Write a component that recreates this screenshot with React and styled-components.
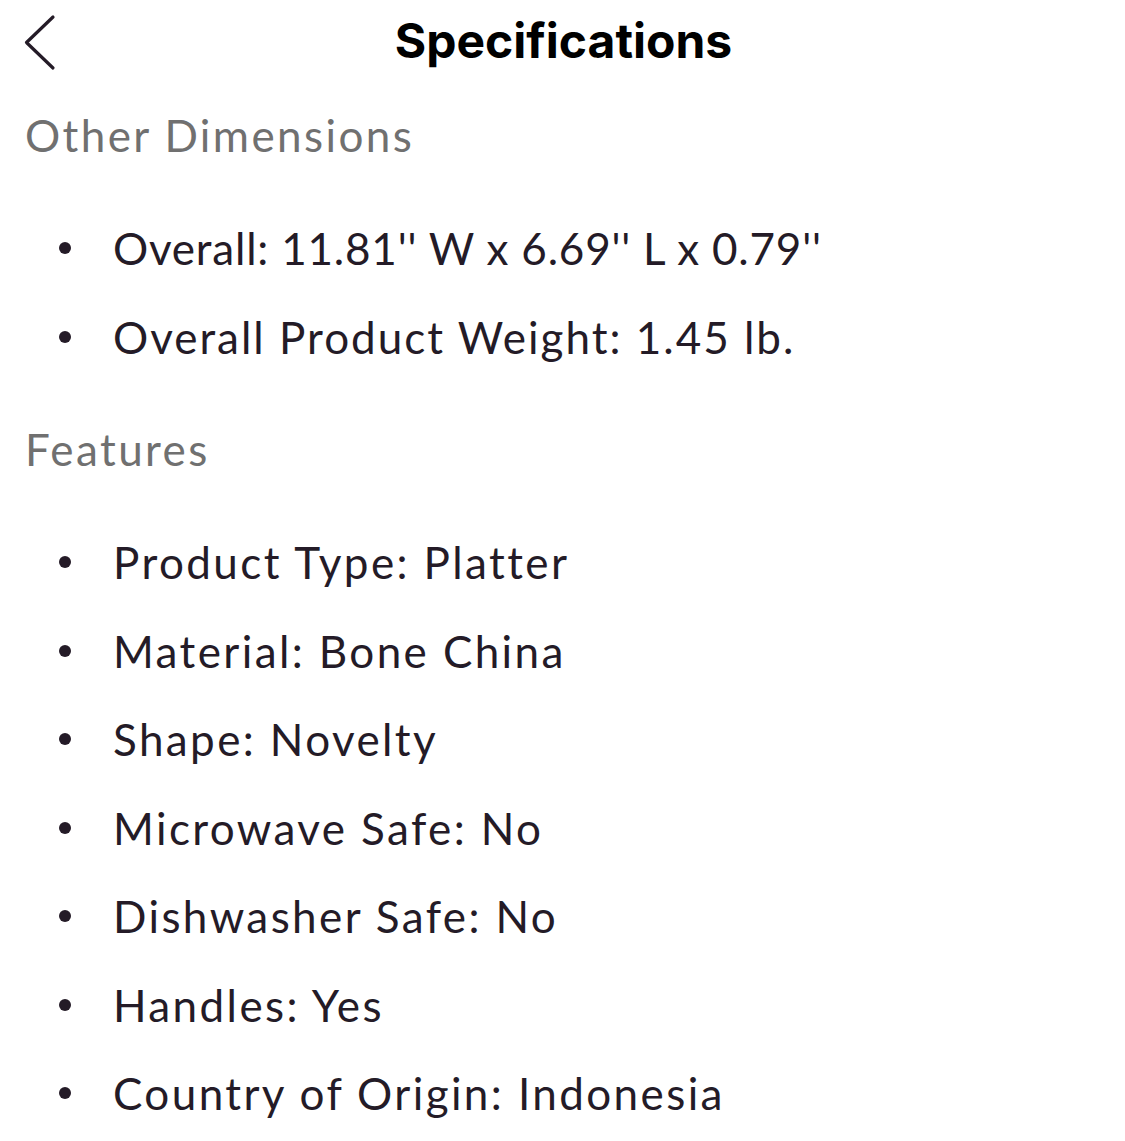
import React from "react";
import styled, { createGlobalStyle } from "styled-components";

const Global = createGlobalStyle`
  html, body { margin: 0; padding: 0; background: #fff; }
  body { font-family: Lato, "Open Sans", sans-serif; }
`;

const Page = styled.div`
  width: 1125px;
  min-height: 1141px;
  background: #fff;
  overflow: hidden;
`;

const Header = styled.header`
  position: relative;
  height: 80px;
  display: flex;
  align-items: center;
  justify-content: center;
`;

const BackButton = styled.button`
  position: absolute;
  left: 19px;
  top: 13px;
  width: 40px;
  height: 60px;
  padding: 0;
  border: none;
  background: none;
  display: flex;
  align-items: center;
  justify-content: center;
`;

const Title = styled.h1`
  margin: 0;
  font-family: Inter, "Liberation Sans", sans-serif;
  font-weight: 700;
  font-size: 48px;
  letter-spacing: 0px;
  color: #000;
  transform: translateX(1px);
`;

const Section = styled.section`
  padding-left: 25px;
  margin-top: ${(p) => p.$top}px;
`;

const Heading = styled.h2`
  margin: 0 0 39px 0;
  height: 60px;
  line-height: 60px;
  font-weight: 400;
  font-size: 44px;
  letter-spacing: 2.4px;
  color: #707070;
`;

const List = styled.ul`
  margin: 0;
  padding: 0;
  list-style: none;
`;

const Item = styled.li`
  display: flex;
  align-items: center;
  height: 88.5px;
  font-size: 44px;
  letter-spacing: ${(p) => p.$spacing ?? 2.4}px;
  color: #241b27;
`;

const Bullet = styled.span`
  width: 12px;
  height: 12px;
  border-radius: 50%;
  background: #241b27;
  margin-left: 34px;
  margin-right: 42px;
  flex-shrink: 0;
`;

const dims = [
  { text: "Overall: 11.81'' W x 6.69'' L x 0.79''", spacing: 0.8 },
  { text: "Overall Product Weight: 1.45 lb.", spacing: 2 },
];
const features = [
  "Product Type: Platter",
  "Material: Bone China",
  "Shape: Novelty",
  "Microwave Safe: No",
  "Dishwasher Safe: No",
  "Handles: Yes",
  "Country of Origin: Indonesia",
];

export default function App() {
  return (
    <Page>
      <Global />
      <Header>
        <BackButton aria-label="Back">
          <svg width="40" height="60" viewBox="0 0 40 60">
            <polyline points="34,4 7.5,29.5 34,55" fill="none" stroke="#241b27" strokeWidth="3.2" strokeLinecap="round" strokeLinejoin="round" />
          </svg>
        </BackButton>
        <Title>Specifications</Title>
      </Header>
      <Section $top={25}>
        <Heading>Other Dimensions</Heading>
        <List>
          {dims.map((d) => (
            <Item key={d.text} $spacing={d.spacing}><Bullet />{d.text}</Item>
          ))}
        </List>
      </Section>
      <Section $top={38}>
        <Heading>Features</Heading>
        <List>
          {features.map((t) => (
            <Item key={t}><Bullet />{t}</Item>
          ))}
        </List>
      </Section>
    </Page>
  );
}
